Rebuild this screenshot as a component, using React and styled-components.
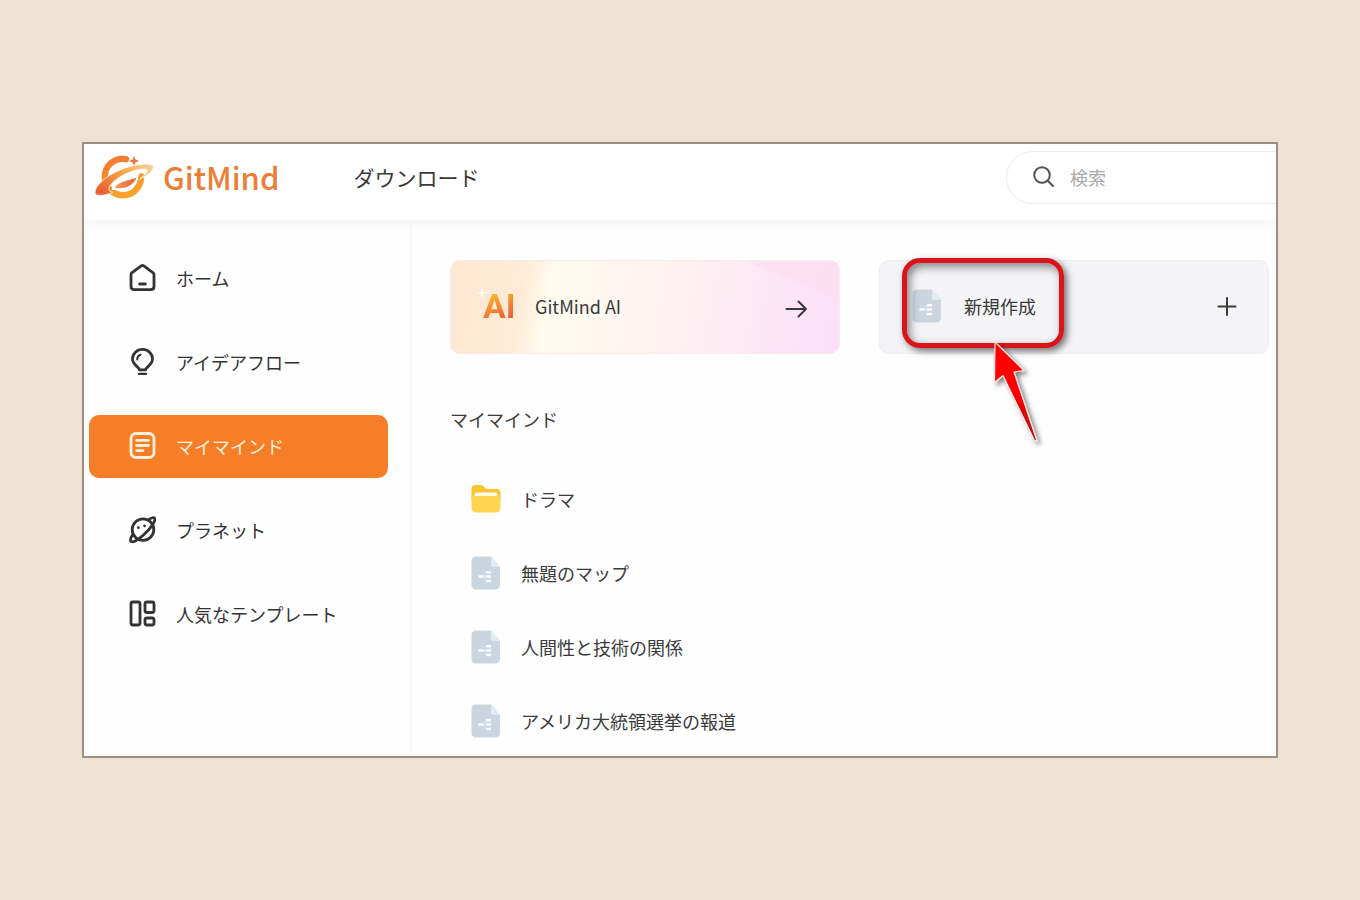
import styled, { createGlobalStyle, css } from "styled-components";

const GlobalStyle = createGlobalStyle`
  * {
    box-sizing: border-box;
  }
  body {
    margin: 0;
    background-color: #efe2d2;
    color: #3a3a3a;
    font-family: "Noto Sans CJK JP", "Noto Sans", sans-serif;
    font-size: 18px;
    line-height: 24px;
  }
`;

const Page = styled.div`
  padding: 142px 82px;
`;

const Window = styled.div`
  background-color: #fefefe;
  border: 2px solid #9b8f83;
  overflow: hidden;
`;

const Header = styled.header`
  display: flex;
  align-items: center;
  height: 76px;
  padding: 0 0 10px 10px;
  background-color: white;
  box-shadow: 0 2px 12px rgba(0, 0, 0, 0.05);
  position: relative;
`;

const Brand = styled.a`
  display: flex;
  align-items: center;
  gap: 7px;
  color: #ec7f35;
  font-size: 31px;
  font-weight: 500;
  line-height: 40px;
  text-decoration: none;
`;

const HeaderLink = styled.a`
  margin-left: 74px;
  color: #3a3a3a;
  font-size: 21px;
  line-height: 28px;
  text-decoration: none;
`;

const Search = styled.label`
  display: flex;
  align-items: center;
  gap: 14px;
  width: 270px;
  height: 53px;
  margin-left: auto;
  padding-left: 25px;
  border: 1px solid #ececee;
  border-right: 0;
  border-radius: 27px 0 0 27px;
`;

const SearchInput = styled.input`
  flex: 1;
  min-width: 0;
  padding: 0;
  border: 0;
  outline: 0;
  background: transparent;
  color: #3a3a3a;
  font: inherit;
  &::placeholder {
    color: #a9a9a9;
    opacity: 1;
  }
`;

const Body = styled.div`
  display: flex;
`;

const Sidebar = styled.nav`
  display: flex;
  flex-direction: column;
  gap: 21px;
  flex: 0 0 327px;
  padding: 27px 22px 27px 5px;
  border-right: 1px solid #f6f6f6;
`;

const NavItem = styled.a`
  display: flex;
  align-items: center;
  gap: 20px;
  height: 63px;
  padding: 0 0 2px 40px;
  border-radius: 10px;
  color: #333;
  text-decoration: none;
  ${({ $active }) =>
    $active &&
    css`
      background-color: #f67e29;
      color: #fff0dc;
    `}
`;

const Main = styled.main`
  flex: 1;
  min-width: 0;
  padding: 40px 7px 18px 39px;
`;

const Cards = styled.div`
  display: grid;
  grid-template-columns: 1fr 1fr;
  gap: 39px;
`;

const CardCell = styled.div`
  position: relative;
`;

const Card = styled.button`
  display: flex;
  align-items: center;
  gap: 22px;
  width: 100%;
  height: 94px;
  padding: 0 31px 2px 32px;
  border: 1px solid #eeeef1;
  border-radius: 10px;
  background-color: #f4f4f7;
  color: #3a3a3a;
  font: inherit;
  text-align: left;
  cursor: pointer;
  ${({ $ai }) =>
    $ai &&
    css`
      border-color: #f9ebe8;
      background-color: #fff;
      background-image: linear-gradient(
          23deg,
          transparent 84%,
          rgba(252, 222, 238, 0.7) 85%
        ),
        linear-gradient(
          100deg,
          #ffe6d2 0%,
          #ffebd7 19%,
          #fffcee 26%,
          #fff6f1 40%,
          #fff0f2 60%,
          #fde6f4 80%,
          #fbdff9 100%
        );
    `}
`;

const CardLabel = styled.span`
  flex: 1;
`;

const AiMark = styled.span`
  position: relative;
  width: 30px;
  font-family: Roboto, sans-serif;
  font-size: 34px;
  font-weight: 700;
  line-height: 40px;
  color: transparent;
  background-image: linear-gradient(160deg, #fbb72b 20%, #f58a32 50%, #e8653b 80%);
  background-clip: text;
`;

const Sparkle = styled.svg`
  position: absolute;
  left: -8px;
  top: 0;
`;

const Callout = styled.div`
  position: absolute;
  left: 23px;
  top: -2px;
  width: 162px;
  height: 90px;
  border: 5px solid #d9151b;
  border-radius: 18px;
  box-shadow: 3px 3px 7px rgba(0, 0, 0, 0.55),
    inset 3px 4px 8px rgba(0, 0, 0, 0.45);
  pointer-events: none;
`;

const Pointer = styled.svg`
  position: absolute;
  left: 105px;
  top: 76px;
  pointer-events: none;
`;

const Heading = styled.h1`
  margin: 53px 0 51px;
  font-size: 18px;
  font-weight: 400;
  line-height: 24px;
`;

const FileList = styled.ul`
  display: flex;
  flex-direction: column;
  gap: 40px;
  margin: 0;
  padding: 0 0 0 21px;
  list-style: none;
`;

const FileLink = styled.a`
  display: flex;
  align-items: center;
  gap: 20px;
  height: 34px;
  color: #3a3a3a;
  text-decoration: none;
`;

const Icon = styled.svg`
  flex: none;
  fill: none;
  stroke: currentColor;
  stroke-width: ${({ $weight }) => $weight || 2.8};
  stroke-linecap: round;
  stroke-linejoin: round;
`;

function Logo() {
  return (
    <svg width="62" height="46" viewBox="0 0 62 46" aria-hidden="true">
      <defs>
        <linearGradient id="planet" x1="0" y1="0" x2="0.4" y2="1">
          <stop offset="0" stopColor="#f4762f" />
          <stop offset="1" stopColor="#f9a32b" />
        </linearGradient>
        <linearGradient id="ring" x1="0" y1="0.7" x2="1" y2="0">
          <stop offset="0" stopColor="#ec5f33" />
          <stop offset="0.5" stopColor="#f9a245" />
          <stop offset="1" stopColor="#fbd7a4" />
        </linearGradient>
        <linearGradient id="core" x1="0" y1="0" x2="1" y2="0">
          <stop offset="0" stopColor="#f6a05f" />
          <stop offset="1" stopColor="#ea5f33" />
        </linearGradient>
      </defs>
      <path
        d="M32 5.2C20 3 10.8 12 10.8 23C10.8 33.6 19.6 41.4 29.2 41.4C38.8 41.4 47 33.6 47.2 22.4"
        fill="none"
        stroke="url(#planet)"
        strokeWidth="6.4"
        strokeLinecap="round"
      />
      <path
        d="M18 33C25 25 36 22.5 45 18.5L44 25C40 31 30 37 18 36Z"
        fill="#fff"
      />
      <path d="M20.5 33.5C26 26.5 35 27 42.5 23.5C40 31 30 36.5 20.5 33.5Z" fill="url(#core)" />
      <path
        d="M1 38C2 28 24 12.5 48 10.2C56 9.4 60.6 11 59.4 14C58 18 51.5 22.4 45.5 25.4C50 21.5 54.5 17.6 53 15.6C47 12.8 22 21 15.4 33C14 36.5 15.5 37.6 19 38.2C12 41.4 0.5 43.5 1 38Z"
        fill="url(#ring)"
        stroke="#fff"
        strokeWidth="0.8"
      />
      <path d="M40 1.8L41.4 5.6L45.2 7L41.4 8.4L40 12.2L38.6 8.4L34.8 7L38.6 5.6Z" fill="#ee7440" />
    </svg>
  );
}

function DocIcon() {
  return (
    <svg width="30" height="34" viewBox="0 0 30 34" aria-hidden="true">
      <path d="M5 0.5H20L29 11V29A4.5 4.5 0 0 1 24.5 33.5H5A4.5 4.5 0 0 1 0.5 29V5A4.5 4.5 0 0 1 5 0.5Z" fill="#cad5e0" />
      <path d="M20 0.5L29 11H22.5A2.5 2.5 0 0 1 20 8.5Z" fill="#e3ebf2" />
      <path d="M8.5 20.5H12M16 16.2H19M16 20.5H19M16 25H19" stroke="#fff" strokeWidth="2.4" strokeLinecap="round" />
      <path d="M12 20.5H15M14 16V25" stroke="#dde5ed" strokeWidth="1" />
    </svg>
  );
}

function FolderIcon() {
  return (
    <svg width="30" height="34" viewBox="0 0 30 34" aria-hidden="true">
      <path d="M4.5 3H10C13 3 13.5 7 17 7H25.5A4 4 0 0 1 29.5 11V18H0.5V7A4 4 0 0 1 4.5 3Z" fill="#fcc530" />
      <rect x="3.5" y="10.5" width="23" height="8" rx="2" fill="#fffbe9" />
      <path d="M0.5 11C1 13.5 2 14 4 14H26C28 14 29 13.5 29.5 11V26A4.5 4.5 0 0 1 25 30.5H5A4.5 4.5 0 0 1 0.5 26Z" fill="#fed550" />
    </svg>
  );
}

const navItems = [
  {
    label: "ホーム",
    icon: (
      <>
        <path d="M12.2 1.9Q13.5 1 14.8 1.9L24.2 8.9Q25 9.6 25 10.7V22.4Q25 25.6 21.8 25.6H5.2Q2 25.6 2 22.4V10.7Q2 9.6 2.8 8.9Z" />
        <path d="M10.6 20H16.4" />
      </>
    ),
  },
  {
    label: "アイデアフロー",
    icon: (
      <>
        <path d="M10.4 21.8C10 18.8 3.5 16.8 3.5 11A10 9.6 0 0 1 23.5 11C23.5 16.8 17 18.8 16.6 21.8Z" />
        <path d="M8.2 11.4Q8.4 7.6 11.6 6.8" strokeWidth="2" />
        <path d="M9.8 25.8H17.2" strokeWidth="2.2" />
      </>
    ),
  },
  {
    label: "マイマインド",
    active: true,
    icon: (
      <>
        <rect x="2" y="1.5" width="23" height="24" rx="5" />
        <path d="M7.6 8.4H19.4M7.6 13.5H19.4M7.6 18.6H14" />
      </>
    ),
  },
  {
    label: "プラネット",
    icon: (
      <>
        <circle cx="14" cy="13.6" r="10.8" />
        <path d="M20 3.4C22.5 1.6 25 1.2 25.6 2.2C27.2 5 21 13 15 18.5C9 24 3.4 27 1.9 25.4C1 24.4 1.6 21.8 3.5 19" />
        <path d="M9.4 11.6V11.7M15.6 9.8V9.9" />
      </>
    ),
  },
  {
    label: "人気なテンプレート",
    icon: (
      <>
        <rect x="2" y="2" width="9" height="23" rx="2" />
        <rect x="16" y="2" width="9" height="10.5" rx="2" />
        <rect x="16" y="18" width="9" height="7" rx="2" />
      </>
    ),
  },
];

const files = [
  { name: "ドラマ", folder: true },
  { name: "無題のマップ" },
  { name: "人間性と技術の関係" },
  { name: "アメリカ大統領選挙の報道" },
];

export default function App() {
  return (
    <Page>
      <GlobalStyle />
      <Window>
        <Header>
          <Brand href="#home">
            <Logo />
            GitMind
          </Brand>
          <HeaderLink href="#download">ダウンロード</HeaderLink>
          <Search>
            <Icon $weight={2} width="24" height="24" viewBox="0 0 24 24" color="#555" aria-hidden="true">
              <circle cx="10" cy="10" r="7.8" />
              <path d="M15.8 15.8L21 21" />
            </Icon>
            <SearchInput type="search" placeholder="検索" aria-label="検索" />
          </Search>
        </Header>
        <Body>
          <Sidebar>
            {navItems.map((item) => (
              <NavItem
                key={item.label}
                href="#nav"
                $active={item.active}
                aria-current={item.active ? "page" : undefined}
              >
                <Icon width="27" height="27" viewBox="0 0 27 27" aria-hidden="true">
                  {item.icon}
                </Icon>
                {item.label}
              </NavItem>
            ))}
          </Sidebar>
          <Main>
            <Cards>
              <CardCell>
                <Card type="button" $ai>
                  <AiMark>
                    AI
                    <Sparkle width="14" height="14" viewBox="0 0 14 14" aria-hidden="true">
                      <path d="M7 0L8 6L14 7L8 8L7 14L6 8L0 7L6 6Z" fill="#fffdf8" />
                    </Sparkle>
                  </AiMark>
                  <CardLabel>GitMind AI</CardLabel>
                  <Icon $weight={2} width="24" height="24" viewBox="0 0 24 24" aria-hidden="true">
                    <path d="M2.5 15H22M14.5 7.5L22 15L14.5 22.5" />
                  </Icon>
                </Card>
              </CardCell>
              <CardCell>
                <Card type="button">
                  <DocIcon />
                  <CardLabel>新規作成</CardLabel>
                  <Icon $weight={2} width="20" height="20" viewBox="0 0 20 20" aria-hidden="true">
                    <path d="M10 2V19M1.5 10.5H18.5" />
                  </Icon>
                </Card>
                <Callout />
                <Pointer width="70" height="120" viewBox="0 0 70 120" aria-hidden="true">
                  <defs>
                    <filter id="pointerShadow" x="-30%" y="-20%" width="180%" height="150%">
                      <feDropShadow dx="3" dy="3" stdDeviation="2.5" floodColor="#000" floodOpacity="0.5" />
                    </filter>
                    <linearGradient id="pointerFill" x1="0" y1="0" x2="0" y2="1">
                      <stop offset="0.5" stopColor="#fe0000" />
                      <stop offset="1" stopColor="#a80f14" />
                    </linearGradient>
                  </defs>
                  <path
                    d="M11 6L40 34.5L30 36L53 105L50.5 104.5L19 39.5L10.5 46.5Z"
                    fill="url(#pointerFill)"
                    stroke="#ffe4e0"
                    strokeWidth="1.2"
                    strokeLinejoin="round"
                    filter="url(#pointerShadow)"
                  />
                </Pointer>
              </CardCell>
            </Cards>
            <Heading>マイマインド</Heading>
            <FileList>
              {files.map((file) => (
                <li key={file.name}>
                  <FileLink href="#file">
                    {file.folder ? <FolderIcon /> : <DocIcon />}
                    {file.name}
                  </FileLink>
                </li>
              ))}
            </FileList>
          </Main>
        </Body>
      </Window>
    </Page>
  );
}
